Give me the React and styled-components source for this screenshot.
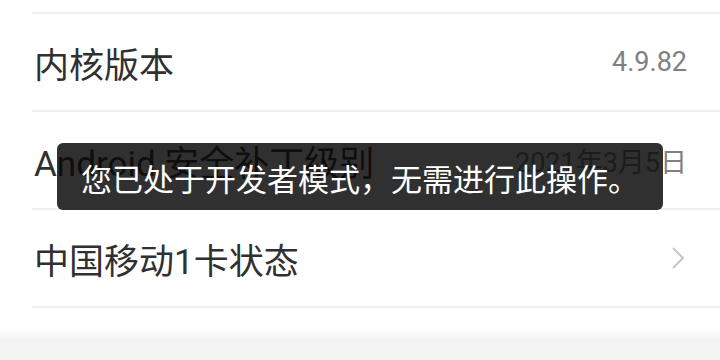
import styled, { createGlobalStyle } from "styled-components";

const GlobalStyle = createGlobalStyle`
  html, body {
    margin: 0;
    padding: 0;
    background: #ffffff;
  }
  body {
    font-family: Roboto, "Noto Sans CJK SC", sans-serif;
  }
`;

const Screen = styled.div`
  position: relative;
  width: 720px;
  height: 360px;
  overflow: hidden;
  background: #ffffff;
  display: flex;
  flex-direction: column;
`;

const List = styled.div`
  margin-top: 12px;
  margin-left: 32px;
  display: flex;
  flex-direction: column;
`;

const Row = styled.div`
  height: 96px;
  border-top: 2px solid #efefef;
  display: flex;
  align-items: center;
  justify-content: space-between;
  padding: 0 33px 0 2px;
  &:last-child {
    border-bottom: 2px solid #efefef;
  }
`;

const Label = styled.div`
  font-size: 35px;
  color: #303030;
`;

const Value = styled.div`
  font-size: 27px;
  color: #808080;
`;

const Chevron = styled.svg`
  width: 14px;
  height: 24px;
  margin-right: 2px;
`;

const Footer = styled.div`
  flex: 1;
  margin-top: 20px;
  background: linear-gradient(#ffffff, #f3f3f3 40%, #f3f3f3);
`;

const Toast = styled.div`
  position: absolute;
  left: 57px;
  top: 143px;
  width: 606px;
  height: 67px;
  border-radius: 6px;
  background: rgba(8, 8, 8, 0.84);
  color: #ffffff;
  font-family: "Noto Sans CJK SC", sans-serif;
  font-size: 31px;
  padding-top: 1px;
  box-sizing: border-box;
  display: flex;
  align-items: center;
  justify-content: center;
`;

const rows = [
  { label: "内核版本", value: "4.9.82" },
  { label: "Android 安全补丁级别", value: "2021年3月5日" },
  { label: "中国移动1卡状态", arrow: true },
];

function App() {
  return (
    <>
      <GlobalStyle />
      <Screen>
        <List>
          {rows.map((r) => (
            <Row key={r.label}>
              <Label>{r.label}</Label>
              {r.arrow ? (
                <Chevron viewBox="0 0 14 24">
                  <path d="M2 2 L12 12 L2 22" fill="none" stroke="#c6c6c6" strokeWidth="2" />
                </Chevron>
              ) : (
                <Value>{r.value}</Value>
              )}
            </Row>
          ))}
        </List>
        <Footer />
        <Toast>您已处于开发者模式，无需进行此操作。</Toast>
      </Screen>
    </>
  );
}

export default App;
